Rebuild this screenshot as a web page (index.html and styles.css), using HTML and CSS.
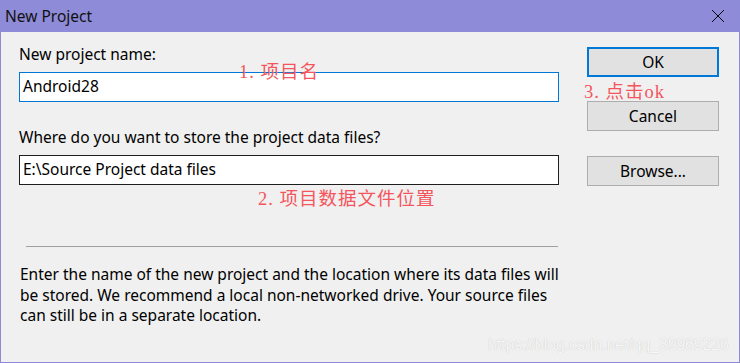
FILE: index.html
```html
<!DOCTYPE html>
<html lang="en">

<head>
    <meta charset="UTF-8" />
    <title>New Project</title>
    <link rel="stylesheet" href="styles.css">
</head>

<body>
    <div class="window">
        <div class="titlebar">
            <span class="title">New Project</span>
            <svg class="close" width="14" height="14" viewBox="0 0 14 14">
                <path d="M1 1 L13 13 M13 1 L1 13" stroke="#000" stroke-width="1" fill="none" />
            </svg>
        </div>

        <div class="content">
            <div class="main">
                <label class="label">New project name:</label>
                <div class="field focused">Android28</div>

                <label class="label second">Where do you want to store the project data files?</label>
                <div class="field">E:\Source Project data files</div>

                <div class="separator"></div>

                <p class="hint">Enter the name of the new project and the location where its data files will be stored. We recommend a local non-networked drive. Your source files can still be in a separate location.</p>
            </div>

            <div class="actions">
                <button class="btn default">OK</button>
                <button class="btn cancel">Cancel</button>
                <button class="btn browse">Browse...</button>
            </div>
        </div>

        <!-- 标注 -->
        <span class="note note-name">1. 项目名</span>
        <span class="note note-ok">3. 点击ok</span>
        <span class="note note-path">2. 项目数据文件位置</span>
        <span class="watermark">https://blog.csdn.net/qq_39969226</span>
    </div>
</body>

</html>
```

FILE: styles.css
```css
html,
body {
    margin: 0;
    padding: 0;
    background: #f0f0f0;
}

body {
    font-family: 'Noto Sans', 'Liberation Sans', sans-serif;
    font-size: 15.5px;
    color: #000;
}

.window {
    position: relative;
    width: 740px;
    height: 363px;
    box-sizing: border-box;
    border: 1px solid #8e8ad8;
    border-top: none;
    background: #f0f0f0;
}

.titlebar {
    height: 32px;
    margin: 0 -1px;
    background: #8e8bd8;
    display: flex;
    align-items: center;
    justify-content: space-between;
    padding: 0 15px 0 5px;
}

.title {
    font-size: 15.5px;
    color: #111;
    margin-top: -1px;
}

.close {
    display: block;
    margin-top: -1px;
}

.content {
    display: flex;
    padding: 0 19px 0 18px;
}

.main {
    width: 540px;
}

.label {
    display: block;
    line-height: 20px;
    white-space: nowrap;
}

.label:first-child {
    margin-top: 12px;
}

.label.second {
    margin-top: 25px;
}

.field {
    margin-top: 8px;
    height: 30px;
    box-sizing: border-box;
    border: 1px solid #1e1e1e;
    background: #fff;
    padding: 0 3px;
    line-height: 27px;
    white-space: nowrap;
}

.field.focused {
    border-color: #0078d7;
}

.separator {
    height: 1px;
    background: #a0a0a0;
    margin: 61px 1px 0 7px;
}

.hint {
    margin: 17px 0 0 1px;
    line-height: 20.5px;
}

.actions {
    margin-left: 28px;
    width: 132px;
    display: flex;
    flex-direction: column;
}

.btn {
    height: 30px;
    box-sizing: border-box;
    background: #e1e1e1;
    border: 1px solid #adadad;
    font-family: inherit;
    font-size: 15.5px;
    color: #000;
    padding: 0;
    margin: 0;
}

.btn.default {
    margin-top: 15px;
    border: 2px solid #0078d7;
}

.btn.cancel {
    margin-top: 24px;
}

.btn.browse {
    margin-top: 25px;
}

.note {
    position: absolute;
    font-family: 'Liberation Serif', 'Noto Sans CJK SC', serif;
    font-size: 18.5px;
    letter-spacing: 1px;
    color: #f4555d;
    line-height: 20px;
    white-space: nowrap;
}

.note-name {
    left: 238px;
    top: 62px;
}

.note-ok {
    left: 583px;
    top: 82px;
}

.note-path {
    left: 257px;
    top: 189px;
}

.watermark {
    position: absolute;
    left: 487px;
    top: 336px;
    font-family: 'Liberation Sans', sans-serif;
    font-size: 15.7px;
    color: #f7f7f7;
    text-shadow: 0 0 1px #bdbdbd;
    white-space: nowrap;
}
```
